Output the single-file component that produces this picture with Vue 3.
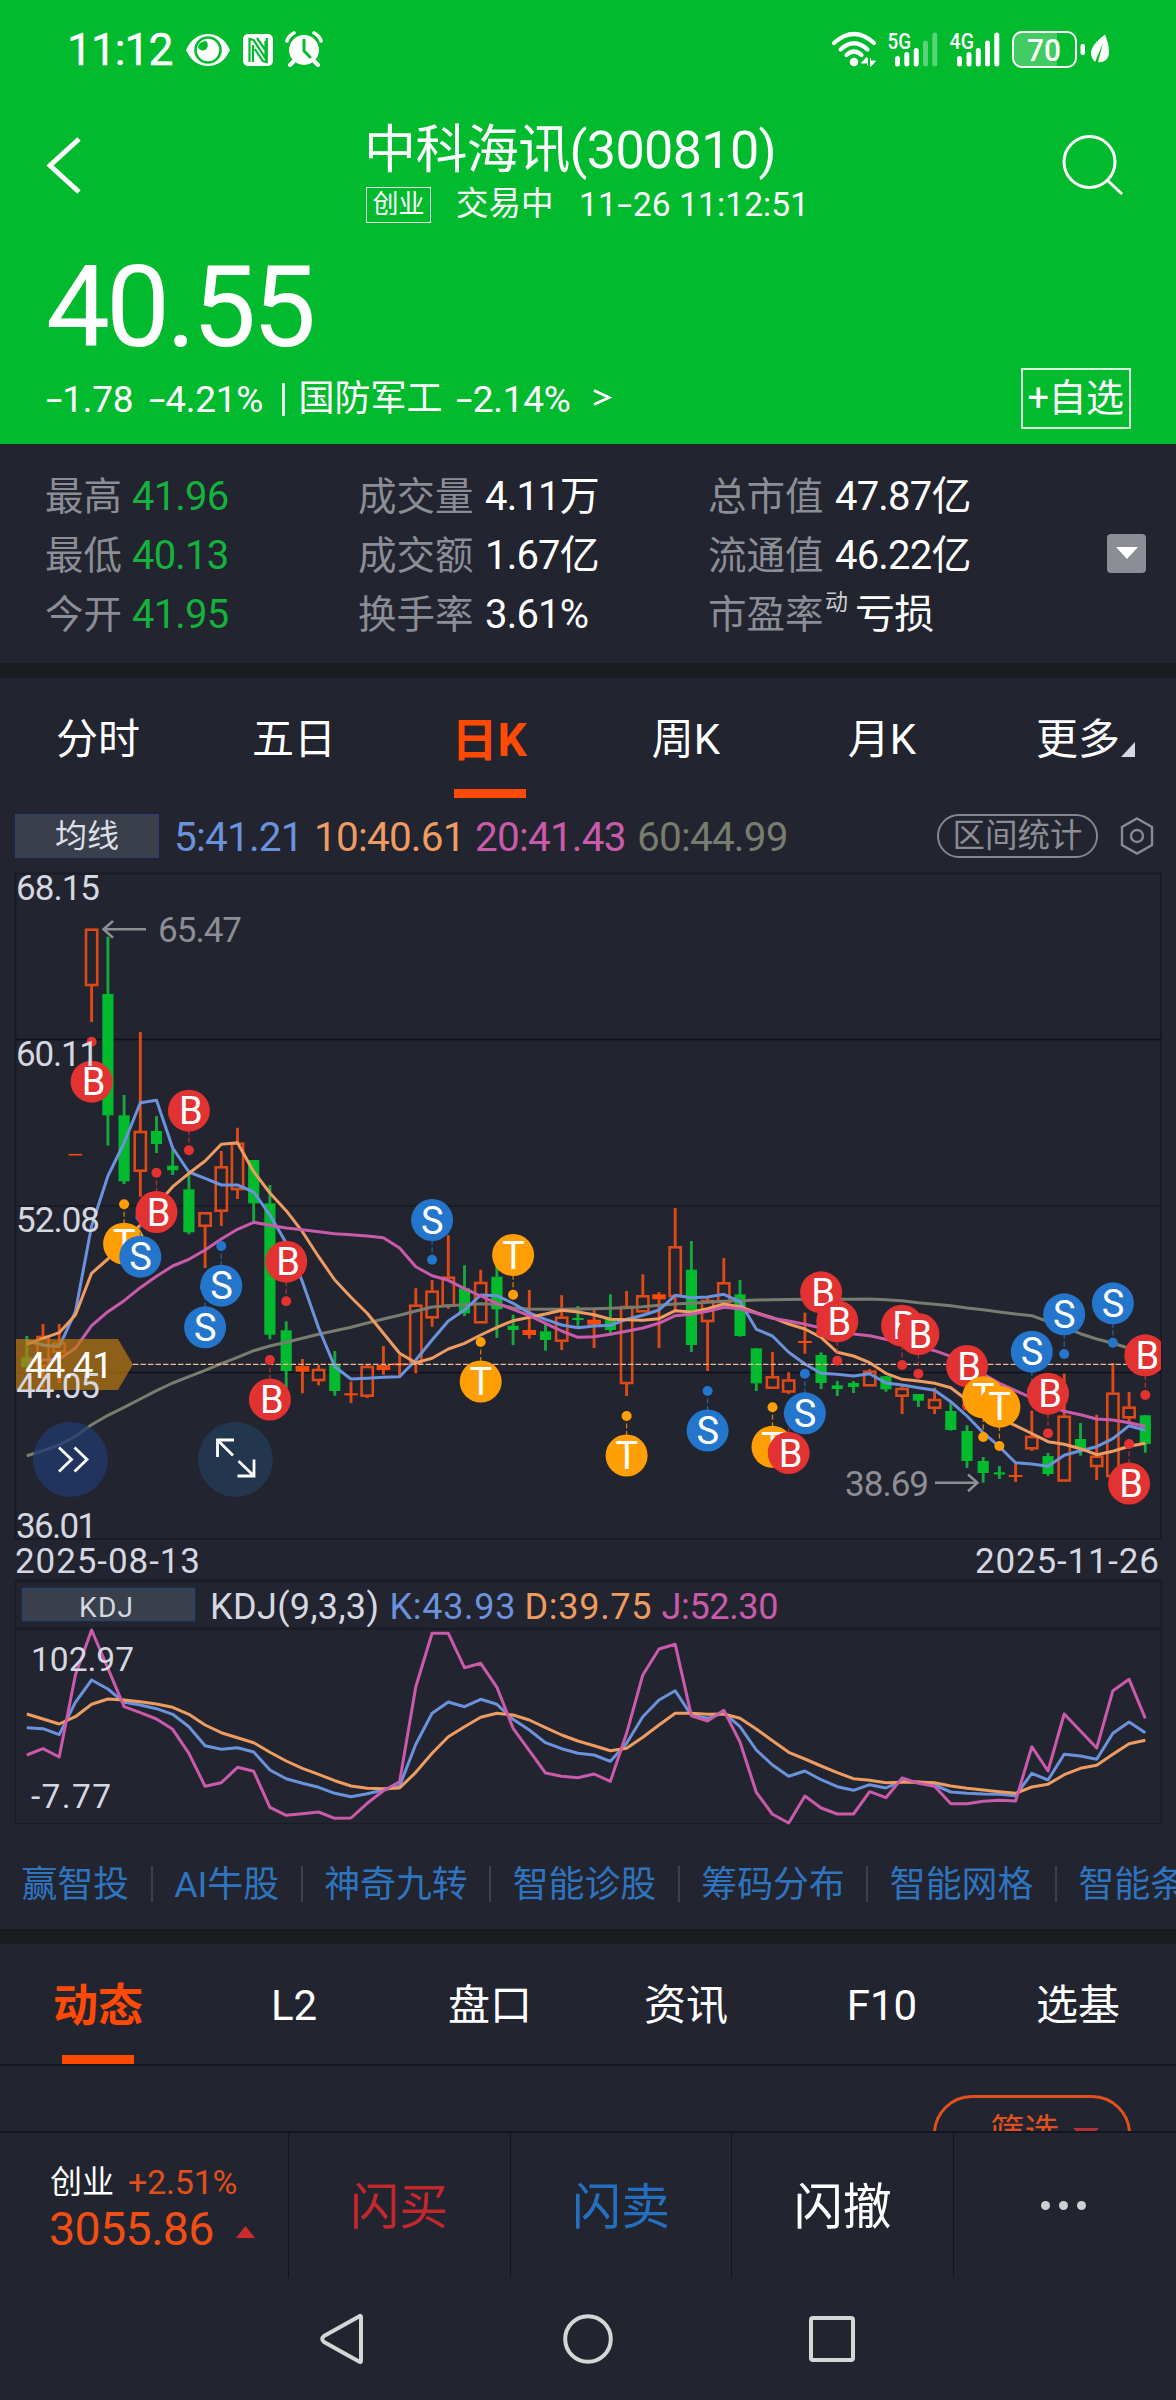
<script setup>
const xAt = (i) => +(26.8 + 16.21 * i).toFixed(1)
const line = (ys) => ys.map((y, i) => `${xAt(i)},${y}`).join(' ')
const kdjLine = (ys) => ys.map((v, i) => `${xAt(i)},${(1540 + v / 3).toFixed(1)}`).join(' ')

// Each candle: kind (g = falling, r = rising hollow, f = rising solid), high, body top, body bottom, low
const candles = [
  ['g', 1336, 1357.3, 1367.3, 1367.3], ['r', 1324, 1336, 1367, 1388], ['r', 1324, 1342.7, 1352.7, 1383],
  ['f', 1154.7, 1153.9, 1155.5, 1154.7], ['r', 928.7, 928.7, 986, 1022], ['g', 936.7, 994, 1115.3, 1145.7],
  ['g', 1095, 1115.3, 1181.3, 1184], ['r', 1032, 1131, 1171.7, 1196.7], ['g', 1116, 1131, 1144, 1153],
  ['g', 1149.3, 1165.7, 1170.3, 1175], ['g', 1173.3, 1189.3, 1232.3, 1234.3], ['r', 1212, 1212.3, 1226.7, 1268],
  ['r', 1151, 1166.3, 1211.7, 1226], ['r', 1127.7, 1142.7, 1190, 1199], ['g', 1160, 1160, 1203.3, 1222],
  ['g', 1185, 1203.3, 1334.7, 1339.3], ['g', 1321.3, 1330.3, 1371, 1388], ['f', 1359, 1366, 1371.7, 1393.3],
  ['r', 1365, 1369, 1381, 1385.3], ['g', 1351, 1365, 1391, 1395.7], ['f', 1381.7, 1393.3, 1395.3, 1403],
  ['r', 1364, 1366, 1396.7, 1398], ['f', 1346, 1365, 1370, 1374.7], ['f', 1355, 1363.3, 1365.3, 1376.7],
  ['r', 1288.3, 1304.7, 1364, 1373.3], ['r', 1280, 1290.7, 1318.3, 1326.7], ['r', 1235.3, 1276.7, 1306.7, 1308.7],
  ['g', 1265.3, 1288.3, 1313.3, 1316], ['r', 1269.7, 1282, 1323.3, 1323.3], ['g', 1263, 1276.7, 1309.3, 1338],
  ['g', 1314.7, 1325.7, 1330, 1345], ['f', 1290, 1330, 1335, 1338.7], ['g', 1323, 1331.3, 1340, 1350.7],
  ['r', 1295.3, 1316.7, 1341.7, 1350], ['g', 1306, 1318, 1320, 1327.7], ['f', 1309.3, 1319.7, 1324.7, 1348],
  ['g', 1294.3, 1319, 1330, 1333], ['r', 1291, 1306, 1384, 1396], ['r', 1274.3, 1295.3, 1312.3, 1312.3],
  ['f', 1292, 1294.3, 1299.3, 1348], ['r', 1208, 1246.3, 1297, 1311], ['g', 1241, 1269.7, 1345, 1352],
  ['r', 1296.7, 1300, 1322, 1371], ['r', 1258, 1282.3, 1303, 1303], ['g', 1280, 1294.3, 1336, 1336.7],
  ['g', 1348.3, 1348.3, 1383.3, 1391], ['r', 1352, 1376.3, 1388.7, 1388.7], ['r', 1372.3, 1379.5, 1392.5, 1394],
  ['f', 1312.7, 1341, 1343, 1353.7], ['g', 1352.3, 1355, 1383, 1389], ['g', 1381, 1385.3, 1389, 1396],
  ['g', 1381, 1383, 1387, 1393], ['r', 1369, 1370.7, 1386.3, 1386.3], ['g', 1376, 1376.3, 1389.3, 1391.7],
  ['r', 1385, 1388, 1396.7, 1414], ['g', 1394, 1394, 1400.7, 1407], ['r', 1387.7, 1399, 1408.7, 1414],
  ['g', 1403, 1411, 1430, 1430.7], ['g', 1425.3, 1431, 1461, 1468], ['g', 1457, 1461, 1473, 1482.7],
  ['g', 1466, 1472.3, 1474.5, 1479], ['f', 1463, 1475, 1477, 1482], ['r', 1410.7, 1436, 1449.3, 1451],
  ['g', 1453, 1456, 1474, 1476], ['r', 1373.7, 1415.7, 1481.5, 1481.5], ['g', 1423, 1439, 1449, 1455.7],
  ['r', 1414.7, 1455.7, 1467, 1480], ['r', 1363, 1392.7, 1477, 1477], ['r', 1392, 1406.7, 1418.3, 1422],
  ['g', 1415, 1415.3, 1444, 1452.7],
]

const averages = [
  { color: '#7a7c70', ys: [1455.7, 1450.7, 1445, 1436.3, 1424.7, 1415.3, 1407.3, 1399, 1390.7, 1383, 1376.7, 1370.3, 1363.7, 1357.3, 1350.7, 1346, 1342.3, 1338.3, 1334.3, 1330.7, 1327.3, 1323, 1319, 1315.3, 1311, 1307, 1305.7, 1304.7, 1303.7, 1304.3, 1308, 1309, 1309.3, 1309.3, 1309, 1308.7, 1308.3, 1307.7, 1306.7, 1305.3, 1304, 1303.3, 1302.3, 1301.3, 1300.7, 1300, 1299.7, 1299.5, 1299.3, 1299.3, 1299.3, 1299.3, 1299, 1299.7, 1300.7, 1302.7, 1304.3, 1305.7, 1308, 1309.7, 1312, 1314, 1315.7, 1321.7, 1327.3, 1333.7, 1339, 1343.3, 1348.3, 1353] },
  { color: '#6b92dc', ys: [1341, 1345, 1346.7, 1311.7, 1226, 1176, 1143, 1102.7, 1100.3, 1148, 1172, 1178.3, 1185, 1185, 1192, 1215, 1243, 1281.7, 1328, 1366.7, 1379, 1378.3, 1377.3, 1376.7, 1360, 1340, 1321, 1310, 1295, 1295.7, 1303.3, 1313, 1319.3, 1325, 1327.7, 1326, 1325.3, 1319.3, 1315.3, 1310, 1295.3, 1297.7, 1297, 1294.3, 1301.7, 1329.3, 1336, 1352.3, 1364, 1373.3, 1374.3, 1376, 1373.7, 1383, 1385, 1387.7, 1390.3, 1401.7, 1416, 1432.7, 1446.7, 1462.7, 1464, 1466.3, 1455.3, 1450.7, 1446.7, 1438.7, 1425.7, 1430.3] },
  { color: '#ee9c61', ys: [1344.3, 1338.3, 1332.7, 1315, 1273.3, 1259, 1243, 1225, 1205, 1186.7, 1173.3, 1161, 1144.3, 1142.7, 1171.7, 1193, 1210.7, 1231.7, 1256.7, 1280, 1297.3, 1313.3, 1333.3, 1353.3, 1362.7, 1358.3, 1349, 1343.3, 1335, 1327.3, 1320.7, 1317.3, 1314, 1310.3, 1312, 1314.7, 1319.3, 1319.7, 1320.3, 1318.7, 1310.7, 1312, 1308.7, 1304, 1306.7, 1312.7, 1317.7, 1324, 1329, 1337.3, 1352.3, 1356, 1362.7, 1373.3, 1379.3, 1381, 1383.3, 1387.7, 1400, 1411, 1418, 1425.7, 1433.5, 1441.7, 1444.3, 1448.7, 1454.7, 1451.3, 1446.3, 1443.3] },
  { color: '#ca5bab', ys: [1360.7, 1360, 1359, 1348.3, 1325.7, 1311.7, 1300.7, 1287.7, 1276.3, 1266, 1259.3, 1250, 1239, 1229.3, 1222.3, 1225.3, 1228, 1229.7, 1231.7, 1233.7, 1234.7, 1236, 1237.7, 1248, 1266.7, 1275.7, 1280.3, 1288.7, 1296, 1303.3, 1309.3, 1315.7, 1323.3, 1331, 1337.3, 1336.7, 1334.3, 1331.3, 1328, 1323.3, 1315.7, 1314.3, 1311.3, 1307.3, 1308.7, 1313.3, 1318.3, 1321, 1324.3, 1328, 1332.3, 1334, 1335.7, 1339.3, 1343, 1346, 1350.7, 1356.3, 1365, 1374, 1383.3, 1390.7, 1398, 1405, 1411.3, 1414.7, 1419, 1420, 1422.7, 1426.3] },
]

// Trade marks: letter, candle index, badge centre, dot centre
const marks = [
  ['B', 4, 1081.7, 1041.7], ['T', 6, 1243.7, 1204.3], ['S', 7, 1256.7, 1217], ['B', 8, 1212, 1172.7],
  ['B', 10, 1110.7, 1150.3], ['S', 11, 1327.3, 1287.6], ['S', 12, 1285.7, 1246], ['B', 15, 1399.5, 1360],
  ['B', 16, 1261.7, 1301.3], ['S', 25, 1220, 1259.7], ['T', 28, 1381.5, 1342], ['T', 30, 1255, 1294.7],
  ['T', 37, 1455.5, 1416], ['S', 42, 1430.5, 1391], ['T', 46, 1446.8, 1407.3], ['B', 47, 1453, 1413.3],
  ['S', 48, 1413.3, 1373.7], ['B', 49, 1292.3, 1332], ['B', 50, 1321.3, 1360.7], ['B', 54, 1325.7, 1365],
  ['B', 55, 1334, 1373.7], ['B', 58, 1366, 1405.7], ['T', 59, 1397.3, 1437], ['T', 60, 1406.7, 1446],
  ['S', 62, 1351.7, 1391], ['B', 63, 1393.7, 1433.3], ['S', 64, 1314.3, 1354], ['S', 67, 1303.3, 1342.7],
  ['B', 68, 1483.5, 1444], ['B', 69, 1355.3, 1395],
]
const markColor = { B: '#e23232', S: '#2376cb', T: '#ff9f05' }
const letterShift = { B: 2, S: 0.2, T: 0.2 }

const kdj = [
  { color: '#6b92dc', ys: [563, 566, 584, 487, 420, 447, 487, 495, 506, 523, 560, 617, 628, 623, 636, 690, 716, 730, 742, 760, 770, 761, 750, 738, 613, 520, 486, 500, 478, 493, 538, 570, 608, 626, 640, 645, 664, 610, 530, 480, 452, 526, 535, 518, 560, 630, 675, 709, 693, 719, 740, 751, 734, 744, 722, 727, 735, 756, 760, 762, 763, 767, 700, 720, 643, 648, 658, 580, 546, 578] },
  { color: '#ee9c61', ys: [522, 537, 552, 530, 493, 477, 480, 485, 492, 502, 523, 555, 578, 593, 608, 637, 663, 685, 703, 722, 738, 745, 746, 744, 697, 640, 590, 560, 532, 520, 525, 540, 563, 585, 603, 617, 632, 625, 592, 555, 520, 520, 523, 522, 535, 567, 602, 637, 657, 678, 698, 716, 721, 728, 727, 726, 728, 738, 745, 750, 755, 760, 741, 733, 704, 685, 676, 643, 611, 601] },
  { color: '#ca5bab', ys: [645, 626, 651, 405, 270, 385, 500, 518, 537, 568, 640, 739, 728, 682, 694, 802, 826, 821, 816, 835, 834, 790, 752, 725, 440, 280, 280, 383, 370, 442, 565, 632, 699, 709, 713, 702, 724, 580, 405, 327, 313, 527, 543, 511, 606, 757, 823, 849, 768, 804, 822, 822, 755, 773, 714, 730, 739, 791, 791, 784, 781, 783, 620, 693, 522, 573, 624, 452, 418, 535] },
]

const stats = [
  [['最高', '41.96'], ['成交量', '4.11万'], ['总市值', '47.87亿']],
  [['最低', '40.13'], ['成交额', '1.67亿'], ['流通值', '46.22亿']],
  [['今开', '41.95'], ['换手率', '3.61%'], ['市盈率', '亏损', '动']],
]
const periods = ['分时', '五日', '日K', '周K', '月K', '更多']
const links = ['赢智投', 'AI牛股', '神奇九转', '智能诊股', '筹码分布', '智能网格', '智能条件单']
const sections = ['动态', 'L2', '盘口', '资讯', 'F10', '选基']
</script>

<template>
  <div class="app">
    <header class="head">
      <div class="status">
        <span class="clock">11:12</span>
        <svg class="st-left" width="140" height="40" viewBox="184 30 140 40">
          <path d="M186 50C191 39 199 34 208 34s17 5 22 16c-5 11-13 16-22 16s-17-5-22-16z" fill="#fff" />
          <circle cx="208" cy="50" r="12.5" fill="none" stroke="#02ba2e" stroke-width="2.6" />
          <path d="M199 44a10 10 0 0 1 7-3c3 3 2 7-1 9-3 1-6 0-7-3z" fill="#02ba2e" />
          <rect x="243" y="34" width="30" height="32" rx="5" fill="#fff" />
          <path d="M249.500 62V39l4 1 12 18V41M253 62V45M257 38l9 13M266.800 38v24l-4-1-8-12" fill="none" stroke="#02ba2e" stroke-width="2.200" />
          <circle cx="304" cy="50" r="15" fill="#fff" />
          <path d="M287 41c1-4 3-6 7-8M321 41c-1-4-3-6-7-8" stroke="#fff" stroke-width="3.600" fill="none" stroke-linecap="round" />
          <path d="M294 61l-4 4M314 61l4 4" stroke="#fff" stroke-width="4" stroke-linecap="round" />
          <path d="M304 40v11l6 6" stroke="#02ba2e" stroke-width="3" fill="none" stroke-linecap="round" />
        </svg>
        <svg class="st-right" width="300" height="60" viewBox="0 0 300 60" fill="#fff">
          <g fill="none" stroke="#fff" stroke-width="4.200" stroke-linecap="round">
            <path d="M14 23Q34 5 54 23" /><path d="M20.500 29.500Q34 17 47.500 29.500" /><path d="M26.500 35Q34 28 41.500 35" />
          </g>
          <circle cx="34" cy="42" r="4.300" />
          <path d="M41.500 43l5-5.500v5.500zM47.500 38v7.500M50.500 38.500v8l5-5.500h-5z" stroke="#fff" stroke-width="1" />
          <text x="67.500" y="29" class="net" textLength="23.500" lengthAdjust="spacingAndGlyphs">5G</text>
          <text x="129.500" y="29" class="net" textLength="24.500" lengthAdjust="spacingAndGlyphs">4G</text>
          <g stroke="#fff" stroke-width="5" stroke-linecap="round">
            <path d="M77.500 38.500V44M86.800 34.500V44M96.200 30.500V44" />
            <path d="M105.500 23V44M114.800 15V44" opacity=".35" />
            <path d="M139.500 38.500V44M149 34.500V44M158.300 30.500V44M167.500 23V44M176.800 15V44" />
          </g>
          <path d="M201 13H237V46H201Q194 46 194 39V20Q194 13 201 13z" opacity=".25" />
          <rect x="193" y="12" width="63" height="35" rx="9" fill="none" stroke="#fff" stroke-width="2" />
          <text x="207" y="41" class="batt" textLength="34" lengthAdjust="spacingAndGlyphs">70</text>
          <rect x="260.500" y="24" width="4.500" height="11" rx="2" />
          <path d="M285 14.500C276 21 271 28 271 33c0 4 2 7 4 9l8-19-5 19c6 1 11-3 11-10 0-7-2-12-4-17.500z" />
        </svg>
      </div>
      <div class="titlebar">
        <svg class="back" width="40" height="64" viewBox="44 134 40 64"><path d="M79 139L50 165.500 79 192" fill="none" stroke="#fff" stroke-width="5" /></svg>
        <div class="titles">
          <div class="title">中科海讯(300810)</div>
          <div class="subtitle"><span class="board">创业</span><span class="state">交易中</span><span class="num">11<b class="dash">-</b>26 11:12:51</span></div>
        </div>
        <svg class="search" width="66" height="66" viewBox="1060 132 66 66" fill="none" stroke="#fff" stroke-width="3"><circle cx="1089.500" cy="162" r="25.500" /><path d="M1107 180l15 14" /></svg>
      </div>
      <div class="price">40.55</div>
      <div class="change">
        <span class="c1"><b class="dash">-</b>1.78</span><span class="c2"><b class="dash">-</b>4.21%</span><i class="bar"></i><span class="c3">国防军工</span><span class="c4"><b class="dash">-</b>2.14%</span>
        <svg class="gt" width="22" height="22" viewBox="0 0 22 22"><path d="M2 2.500L17 9.500 2 16.500" fill="none" stroke="#fff" stroke-width="2.800" /></svg>
        <button class="fav">+自选</button>
      </div>
    </header>

    <section class="stats">
      <div class="grid">
        <div v-for="(row, r) in stats" :key="r" class="srow" :class="'r' + r">
          <div v-for="(c, k) in row" :key="k" class="cell">
            <span class="lab">{{ c[0] }}<sup v-if="c[2]">{{ c[2] }}</sup></span><span class="val" :class="{ down: k === 0 }">{{ c[1] }}</span>
          </div>
        </div>
      </div>
      <div class="expand"><svg width="22" height="13" viewBox="0 0 22 13"><path d="M0 0H22L11 12z" fill="#fff" /></svg></div>
    </section>
    <div class="gap"></div>

    <nav class="tabs periods">
      <div v-for="(p, i) in periods" :key="p" class="tab" :class="{ on: i === 2 }"><span>{{ p }}</span><i v-if="i === 5" class="corner"></i></div>
    </nav>

    <div class="ma">
      <span class="chip">均线</span>
      <span class="m m1">5:41.21</span><span class="m m2">10:40.61</span><span class="m m3">20:41.43</span><span class="m m4">60:44.99</span>
      <span class="pill">区间统计</span>
      <svg class="hex" width="36" height="40" viewBox="0 0 36 40" fill="none" stroke="#888b91" stroke-width="2.400"><path d="M18 2.500L33 11v18L18 37.500 3 29V11z" /><circle cx="18" cy="20" r="6" /></svg>
    </div>

    <svg class="chart" width="1176" height="968" viewBox="0 864 1176 968">
      <g stroke="#191b25" stroke-width="2" fill="none">
        <path d="M15.500 873.500H1161V1539H15.500z" /><path d="M15.500 1206H1161" stroke-width="2" />
        <path d="M15.500 1039.500H1161M15.500 1372.500H1161" stroke="#0f1119" stroke-width="1.300" />
        <path d="M15.500 1580.700H1161M15.500 1628.700H1161" /><path d="M15.500 1580V1823.500H1161V1580" stroke-width="1.200" />
      </g>
      <g v-for="(c, i) in candles" :key="'c' + i">
        <template v-if="c[0] === 'r'">
          <path :d="`M${xAt(i)} ${c[1]}V${c[2]}M${xAt(i)} ${c[3]}V${c[4]}`" stroke="#dc4a18" stroke-width="2.900" />
          <rect :x="xAt(i) - 5.600" :y="c[2] + 1" width="11.200" :height="c[3] - c[2] - 2" fill="none" stroke="#dc4a18" stroke-width="2.600" />
        </template>
        <template v-else>
          <path :d="`M${xAt(i)} ${c[1]}V${c[4]}`" :stroke="c[0] === 'g' ? '#16a83d' : '#dc4a18'" stroke-width="2.900" />
          <rect :x="xAt(i) - (c[0] === 'g' ? 5.600 : 6.800)" :y="c[2]" :width="c[0] === 'g' ? 11.200 : 13.600" :height="c[3] - c[2]" :fill="c[0] === 'g' ? '#02ba2e' : '#f84a0a'" />
        </template>
      </g>
      <polyline v-for="a in averages" :key="a.color" :points="line(a.ys)" fill="none" :stroke="a.color" stroke-width="3" stroke-linejoin="round" />

      <path d="M16 1339H118L133 1364.500 118 1390H16z" fill="#c07c0e" fill-opacity=".68" />
      <path d="M133 1364.300H1161" stroke="#e6bd97" stroke-width="1.300" stroke-dasharray="5.500 2" />

      <g clip-path="url(#plot)">
        <g v-for="(m, i) in marks" :key="'m' + i">
          <path :d="`M${xAt(m[1])} ${m[3]}V${m[2]}`" :stroke="markColor[m[0]]" stroke-width="1.300" stroke-dasharray="5 2.500" opacity=".75" />
          <circle :cx="xAt(m[1])" :cy="m[3]" r="5" :fill="markColor[m[0]]" />
          <circle :cx="xAt(m[1])" :cy="m[2]" r="21" :fill="markColor[m[0]]" />
          <text :x="xAt(m[1]) + letterShift[m[0]]" :y="m[2] + 13.500" class="letter">{{ m[0] }}</text>
        </g>
      </g>
      <clipPath id="plot"><rect x="15" y="870" width="1146" height="670" /></clipPath>

      <g class="axis">
        <text x="16" y="900" textLength="84">68.15</text><text x="16" y="1066" textLength="83">60.11</text>
        <text x="16" y="1232" textLength="84">52.08</text><text x="16" y="1398" textLength="84">44.05</text>
        <text x="16" y="1538" textLength="81">36.01</text>
        <text x="15" y="1572.500" textLength="185">2025-08-13</text><text x="975" y="1572.500" textLength="184">2025-11-26</text>
      </g>
      <text x="25" y="1378" textLength="88" class="tag">44.41</text>
      <g class="ext"><text x="158" y="942" textLength="84">65.47</text><text x="845" y="1495.500" textLength="84">38.69</text></g>
      <g stroke="#8d8f94" stroke-width="2.500" fill="none">
        <path d="M146 929.300H103M113 921l-9.500 8.300 9.500 8.500" /><path d="M935 1482.700H978M968 1474.500l9.500 8.200-9.500 8.500" />
      </g>

      <circle cx="70.500" cy="1459.500" r="37.500" fill="#20396f" fill-opacity=".75" />
      <path d="M59 1447.500L71.500 1459.500 59 1471.500M74.500 1447.500L87 1459.500 74.500 1471.500" fill="none" stroke="#fff" stroke-width="2.800" />
      <circle cx="235.500" cy="1459.500" r="37.500" fill="#22364d" />
      <path d="M217.500 1457V1440H234M218 1440.500L233 1455.500M254 1459.500V1476H237.500M253.500 1475.500L238.500 1461" fill="none" stroke="#fff" stroke-width="2.800" />

      <rect x="22.500" y="1588.500" width="172" height="32" fill="#39404c" stroke="#28406a" stroke-width="1.500" />
      <text x="79" y="1616.500" class="kchip" textLength="54">KDJ</text>
      <g class="kd">
        <text x="210" y="1619" fill="#d5d8e0" textLength="169">KDJ(9,3,3)</text>
        <text x="389.500" y="1619" fill="#6b92dc" textLength="126">K:43.93</text>
        <text x="524.500" y="1619" fill="#ee9c61" textLength="127">D:39.75</text>
        <text x="661.500" y="1619" fill="#ca5bab" textLength="117">J:52.30</text>
      </g>
      <polyline v-for="k in kdj" :key="k.color" :points="kdjLine(k.ys)" fill="none" :stroke="k.color" stroke-width="3" stroke-linejoin="round" />
      <g class="klab"><text x="31" y="1670.500" textLength="103">102.97</text><text x="31" y="1808" textLength="80">-7.77</text></g>
    </svg>

    <div class="links"><span v-for="l in links" :key="l">{{ l }}</span></div>
    <div class="gap g2"></div>

    <nav class="tabs sections">
      <div v-for="(s, i) in sections" :key="s" class="tab" :class="{ on: i === 0 }"><span>{{ s }}</span></div>
    </nav>
    <div class="feed">
      <div class="filter"><span>筛选</span><svg width="26" height="14" viewBox="0 0 26 14"><path d="M0 0H26L13 13z" fill="#b5323a" /></svg></div>
    </div>

    <footer class="trade">
      <div class="index">
        <div class="l1"><span class="nm">创业</span><span class="pc">+2.51%</span></div>
        <div class="l2"><span>3055.86</span><svg width="19" height="12" viewBox="0 0 19 12"><path d="M9.500 0L19 12H0z" fill="#cf2a2f" /></svg></div>
      </div>
      <div class="act buy">闪买</div><div class="act sell">闪卖</div><div class="act">闪撤</div>
      <div class="act more"><i></i><i></i><i></i></div>
    </footer>
    <div class="sysnav">
      <svg width="1176" height="122" viewBox="0 2278 1176 122" fill="none" stroke="#d6d6d6" stroke-width="4">
        <path d="M361 2317Q361 2315 359 2316.500L324 2336Q320.500 2339 324 2342L359 2361.500Q361 2363 361 2361z" stroke-linejoin="round" />
        <circle cx="588" cy="2339" r="22.800" /><rect x="811" y="2318" width="42" height="42" rx="2" />
      </svg>
    </div>
  </div>
</template>

<style>
body { margin: 0; background: #22242f; }
</style>

<style scoped>
.app { width: 1176px; height: 2400px; overflow: hidden; background: #22242f; color: #fff; font-family: Roboto, "Noto Sans CJK SC", sans-serif; line-height: 1; white-space: nowrap; display: flex; flex-direction: column; }
.app > * { flex: none; box-sizing: border-box; }
.head { height: 444px; background: #02ba2e; }
.status { height: 100px; display: flex; align-items: flex-start; box-sizing: border-box; padding: 20px 0 0 67px; }
.clock { font-size: 44.5px; width: 117px; margin-top: 8px; letter-spacing: -1.1px; -webkit-text-stroke: 0.4px #fff; }
.st-left { margin-top: 10px; }
.st-right { margin-left: 496px; }
.net { font-size: 22px; font-weight: 500; }
.batt { font-size: 32px; font-weight: 500; }
.titlebar { height: 140px; display: flex; align-items: flex-start; }
.back { margin: 34px 0 0 44px; }
.titles { width: 460px; margin-left: 280px; padding-top: 22px; }
.title { font-size: 52px; height: 64px; line-height: 58px; letter-spacing: -0.6px; }
.subtitle { display: flex; align-items: center; height: 37px; font-size: 33.5px; }
.board { font-size: 26px; border: 1.5px solid #dff5e2; width: 63px; height: 34px; line-height: 33px; text-align: center; margin-left: 2px; }
.state { margin-left: 25px; width: 123px; font-size: 32.5px; }
.dash { display: inline-block; font-weight: 400; transform: scaleX(1.6); margin: 0 0.1em; }
.num { letter-spacing: 0.1px; }
.search { margin: 32px 0 0 236px; }
.price { height: 124px; font-size: 114px; line-height: 134px; padding-left: 46px; letter-spacing: -4px; }
.change { height: 60px; display: flex; align-items: center; font-size: 37px; padding: 5px 0 0 45px; letter-spacing: -0.3px; }
.c1 { width: 103px; } .c2 { width: 134px; }
.bar { width: 2.5px; height: 33px; background: #e6f7e9; margin-right: 14px; }
.c3 { width: 157px; font-size: 36px; letter-spacing: 0; } .c4 { width: 136px; }
.gt { margin-top: 0; }
.fav { margin-left: 407px; width: 110px; height: 61px; margin-top: -2px; padding: 0; border: 2px solid #d9f5dd; background: none; color: #fff; font: 38px/57px Roboto, "Noto Sans CJK SC", sans-serif; letter-spacing: -0.5px; }
.stats { height: 219px; display: flex; padding-top: 23px; }
.grid { width: 1107px; }
.srow { display: flex; height: 59px; align-items: center; }
.cell { display: flex; align-items: baseline; }
.cell:nth-child(1) { width: 313px; padding-left: 45px; }
.cell:nth-child(2) { width: 350px; }
.cell:nth-child(3) { width: 390px; }
.lab { font-size: 38.5px; color: #8b8e95; width: 127px; position: relative; }
.cell:nth-child(1) .lab { width: 87px; }
.lab sup { position: absolute; left: 117px; top: -5px; font-size: 23px; color: #c9ccd2; line-height: 1; }
.r2 .cell:nth-child(3) .lab { width: 147px; }
.val { font-size: 40px; letter-spacing: -0.8px; }
.down { color: #14b23d; }
.expand { width: 39px; height: 39px; margin-top: 67px; border-radius: 4px; background: #8b8f95; display: flex; align-items: center; justify-content: center; }
.gap { height: 15px; background: #1b1c20; }
.tabs { height: 120px; display: flex; font-size: 42px; }
.tab { width: 196px; height: 120px; box-sizing: border-box; padding-top: 4px; display: flex; justify-content: center; align-items: center; position: relative; }
.on { color: #ff4a05; font-weight: 700; font-size: 45px; }
.on::after { content: ""; position: absolute; left: 62px; bottom: 0; width: 72px; height: 9px; background: #ff4a05; }
.periods .on span { font-size: 46px; margin-left: -2px; }
.corner { position: absolute; right: 41px; top: 64px; border-left: 14px solid transparent; border-bottom: 15px solid #d5d8e0; }
.ma { height: 66px; display: flex; align-items: center; padding: 9px 0 0 15px; font-size: 40.5px; letter-spacing: -0.8px; }
.m { padding-top: 3px; }
.chip { width: 142px; height: 42px; border: 1.5px solid #2a426c; background: #39404c; color: #dcdfe6; font-size: 32px; line-height: 42px; text-align: center; letter-spacing: 0; margin-right: 15px; }
.m1 { width: 140px; color: #6b92dc; } .m2 { width: 161px; color: #ee9c61; } .m3 { width: 162px; color: #ca5bab; } .m4 { width: 300px; color: #787c6e; }
.pill { width: 157px; height: 40px; border: 2px solid #85878d; border-radius: 22px; color: #8b8e95; font-size: 32.5px; line-height: 41px; text-align: center; letter-spacing: 0; }
.hex { margin-left: 21px; }
.chart { display: block; }
.chart text { font-family: Roboto, sans-serif; }
.letter { font-size: 38px; fill: #fff; text-anchor: middle; }
.axis { font-size: 35px; fill: #d5d8e0; }
.tag { font-size: 37px; fill: #fff; }
.ext { font-size: 35px; fill: #8d8f94; }
.kchip { font-size: 28px; fill: #d5d8e0; }
.kd { font-size: 36px; }
.klab { font-size: 33.5px; fill: #d5d8e0; }
.links { height: 97px; display: flex; align-items: center; color: #2f74bf; font-size: 35.9px; overflow: hidden; padding-top: 7px; }
.links span { padding: 0 21.5px; height: 36px; line-height: 38px; border-left: 2.5px solid #3b434f; flex: none; }
.links span:first-child { border-left: 0; }
.feed { height: 67px; border-top: 2px solid #161822; overflow: hidden; display: flex; justify-content: flex-end; padding-right: 45px; }
.filter { box-sizing: border-box; width: 198px; height: 78px; margin-top: 29px; border: 3px solid #e0511e; border-radius: 39px; display: flex; align-items: flex-start; padding: 16px 0 0 54px; color: #e0511e; font-size: 34.5px; }
.filter svg { margin: 14px 0 0 14px; }
.trade { height: 147px; border-top: 2px solid #14161f; display: flex; }
.index { width: 289px; box-sizing: border-box; padding: 31px 0 0 50px; border-right: 1px solid #14161f; }
.l1 { display: flex; align-items: center; height: 36px; font-size: 34px; }
.nm { font-size: 32px; width: 78px; } .pc { color: #e0501c; letter-spacing: -0.2px; }
.l2 { display: flex; align-items: center; height: 56px; font-size: 46.5px; color: #f04e14; letter-spacing: -0.6px; }
.l2 span { margin: 2px 0 0 -1px; }
.l2 svg { margin: 8px 0 0 22px; }
.act { width: 222px; box-sizing: border-box; padding-top: 3px; border-right: 1px solid #14161f; display: flex; justify-content: center; align-items: center; font-size: 49px; }
.act:last-child { border: 0; padding: 0 4px 0 0; }
.buy { color: #c3282d; } .sell { color: #2470bf; }
.more i { width: 9px; height: 9px; border-radius: 50%; background: #cfd0d3; margin: 0 4.5px; }
.sysnav { height: 122px; }
</style>
